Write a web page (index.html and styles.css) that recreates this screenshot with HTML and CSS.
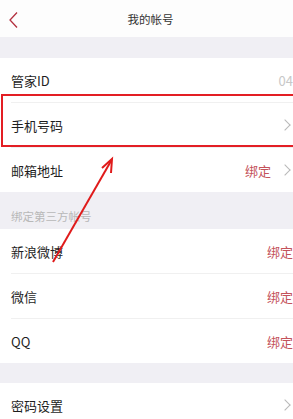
FILE: index.html
```html
<!DOCTYPE html>
<html lang="zh">
<head>
    <meta charset="UTF-8">
    <meta name="viewport" content="width=device-width, initial-scale=1.0">
    <title>我的帐号</title>
    <link rel="stylesheet" href="styles.css">
</head>
<body>
    <div class="page">
        <div class="navbar">
            <svg class="back" width="12" height="18" viewBox="0 0 12 18">
                <polyline points="9,1.5 2,9 9,16.5" fill="none" stroke="#b3303f" stroke-width="1.3" />
            </svg>
            <div class="title">我的帐号</div>
        </div>

        <div class="gap"></div>

        <div class="group">
            <div class="row">
                <span class="label">管家ID</span>
                <span class="value">04</span>
            </div>
            <div class="row">
                <span class="label">手机号码</span>
                <span class="arrow"></span>
            </div>
            <div class="row">
                <span class="label">邮箱地址</span>
                <span class="bind">绑定</span>
                <span class="arrow"></span>
            </div>
        </div>

        <div class="section-title">绑定第三方帐号</div>

        <div class="group">
            <div class="row">
                <span class="label">新浪微博</span>
                <span class="bind">绑定</span>
            </div>
            <div class="row">
                <span class="label">微信</span>
                <span class="bind">绑定</span>
            </div>
            <div class="row">
                <span class="label">QQ</span>
                <span class="bind">绑定</span>
            </div>
        </div>

        <div class="gap gap-small"></div>

        <div class="group">
            <div class="row">
                <span class="label">密码设置</span>
                <span class="arrow"></span>
            </div>
        </div>

        <!-- 标注 -->
        <div class="mark-box"></div>
        <svg class="mark-arrow" width="293" height="419" viewBox="0 0 293 419">
            <line x1="53" y1="262" x2="111" y2="161" stroke="#e01b1b" stroke-width="2" />
            <polyline points="102,168 112,159 111,173" fill="none" stroke="#e01b1b" stroke-width="2" />
        </svg>
    </div>
</body>
</html>
```

FILE: styles.css
```css
html,
body {
    margin: 0;
    padding: 0;
    overflow: hidden;
    background-color: #f0eff4;
}

body {
    font-family: 'Noto Sans CJK SC', 'Noto Sans', sans-serif;
    color: #1e1e1e;
}

.page {
    position: relative;
    width: 301px;
    height: 419px;
}

.navbar {
    position: relative;
    height: 37px;
    background-color: #fdfdfd;
    display: flex;
    align-items: center;
    justify-content: center;
}

.back {
    position: absolute;
    left: 8px;
    top: 11px;
}

.title {
    font-size: 11.5px;
    color: #333;
}

.gap {
    height: 21px;
}

.gap-small {
    height: 20px;
}

.group {
    background-color: #fff;
}

.row {
    height: 44px;
    margin-left: 11px;
    padding-right: 8px;
    display: flex;
    align-items: center;
    border-bottom: 1px solid #f0f0f0;
}

.row:last-child {
    border-bottom: none;
}

.label {
    flex: 1;
    font-size: 13px;
    line-height: 1;
}

.value {
    font-size: 13px;
    color: #c8c8c8;
}

.bind {
    font-size: 13px;
    color: #c4525a;
}

.bind + .arrow {
    margin-left: 10px;
}

.arrow {
    width: 7px;
    height: 7px;
    border-top: 1px solid #b8b8b8;
    border-right: 1px solid #b8b8b8;
    transform: rotate(45deg);
    margin-right: 4px;
}

.section-title {
    height: 37px;
    box-sizing: border-box;
    padding: 16px 0 0 11px;
    font-size: 11.5px;
    color: #b8b8b8;
}

.mark-box {
    position: absolute;
    left: 1px;
    top: 94px;
    width: 310px;
    height: 49px;
    border: 2px solid #e31e24;
}

.mark-arrow {
    position: absolute;
    left: 0;
    top: 0;
}
```
